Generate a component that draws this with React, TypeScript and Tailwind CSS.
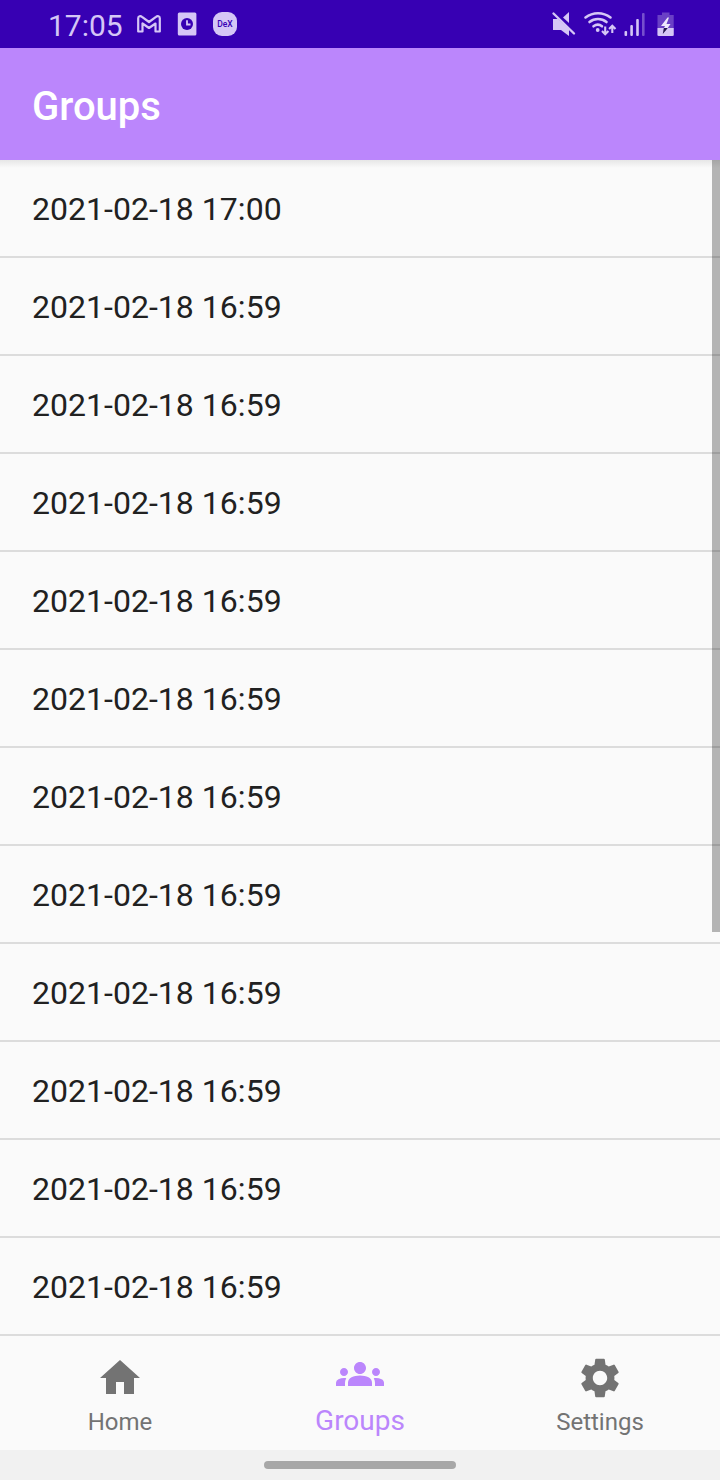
import React from "react";
import { MdGroups, MdHome, MdSettings } from "react-icons/md";

const groups = ["2021-02-18 17:00", ...Array<string>(11).fill("2021-02-18 16:59")];

function StatusBar() {
  return (
    <div className="flex h-12 shrink-0 items-center justify-between bg-[#3700b3] pl-12 text-[#d5c6f6]">
      <div className="flex h-12 items-center">
        <span className="w-[89px] pt-[2px] text-[30px] leading-[45px] whitespace-nowrap">17:05</span>
        <svg className="h-[18px] w-6" viewBox="0 0 24 18" fill="none" stroke="currentColor" strokeWidth="2.2" strokeLinejoin="round">
          <path d="M1.2 16.5V3.2C1.2 1 3.5.6 5 1.8L12 7l7-5.2c1.5-1.2 3.8-.8 3.8 1.4v13.3h-4.3V8.5L12 13 5.5 8.5v8z" />
        </svg>
        <svg className="ml-4 h-6 w-5" viewBox="0 0 20 24">
          <rect x=".8" y=".5" width="18.6" height="23" rx="1.5" fill="currentColor" />
          <circle cx="10" cy="12" r="6" fill="#3700b3" />
          <path d="M10 8.3v4.2h3.5" fill="none" stroke="currentColor" strokeWidth="1.8" />
        </svg>
        <div className="ml-4 flex h-6 w-6 items-center justify-center rounded-[9px] bg-current">
          <span className="text-[8.5px] leading-none font-medium text-[#3700b3]">DeX</span>
        </div>
      </div>
      <svg className="h-12 w-[180px]" viewBox="540 0 180 48">
        <path d="M553 19h5l11 10v7l-8-6h-8z" fill="currentColor" />
        <path d="M563 17.5l6-5.500v11z" fill="currentColor" />
        <path d="M553.5 13.5L574 33.5" stroke="currentColor" strokeWidth="2.4" strokeLinecap="round" />
        <g fill="none" stroke="currentColor" strokeWidth="2.6" strokeLinecap="round">
          <path d="M585.5 17.5c7.5-5.7 17.5-5.7 25 0M589.5 22c5-4 12-4 17 0M593.5 26.3c2.7-2 6-2 8.5 0" />
        </g>
        <circle cx="597.7" cy="30" r="1.9" fill="currentColor" />
        <path d="M605.2 26.500v7.500M602 31l3.200 3.200 3.200-3.200M612.300 33v-7M609.100 29l3.200-3.200 3.200 3.200" fill="none" stroke="currentColor" strokeWidth="2.1" />
        <g fill="currentColor">
          <rect x="624.5" y="31" width="2.6" height="5" rx="1" />
          <rect x="630.3" y="25" width="2.6" height="11" rx="1" />
          <rect x="636.2" y="19" width="2.6" height="17" rx="1" />
          <rect x="642" y="13" width="2.6" height="23" rx="1" opacity=".4" />
        </g>
        <path d="M657.5 15h4.500v-2.500h7.500V15h4.200v21h-16.200z" fill="#6a40c6" />
        <path d="M657.5 28h16.200v6.500q0 1.500-1.500 1.500H659q-1.500 0-1.500-1.500z" fill="currentColor" />
        <path d="M667.5 17.500l-6.500 8.500h4l-1.500 3h3.500l3.500-5h-4l2.500-6.500z" fill="#eee8fb" />
        <path d="M663.8 28h4l-5 6z" fill="#24164f" />
      </svg>
    </div>
  );
}

export default function App() {
  return (
    <div className="flex h-[1480px] w-[720px] flex-col overflow-hidden bg-[#fafafa] font-['Roboto',sans-serif]">
      <StatusBar />
      <header className="flex h-28 shrink-0 items-center bg-[#bb86fc] pt-[5px] pl-8 text-[40px] font-medium text-white">Groups</header>
      <main className="relative h-[1176px] shrink-0">
        <ul>
          {groups.map((name, i) => (
            <li key={i} className="flex h-[98px] items-center border-b-2 border-[#dcdcdc] pt-[2px] pl-8 text-[32px] tracking-[0.03px] text-[#212121]">
              {name}
            </li>
          ))}
        </ul>
        <div className="absolute inset-x-0 top-0 h-2 bg-linear-to-b from-black/8 to-transparent" />
        <div className="absolute top-0 right-0 h-[772px] w-2 bg-black/28" />
      </main>
      <nav className="grid h-[114px] shrink-0 grid-cols-3 text-[#737373]">
        <div className="flex flex-col items-center pt-[18px]">
          <MdHome className="size-12" />
          <span className="mt-[6px] text-[24px] leading-[28px]">Home</span>
        </div>
        <div className="flex flex-col items-center pt-[14px] text-[#bb86fc]">
          <MdGroups className="size-12" />
          <span className="mt-[7px] text-[28px] leading-[32px]">Groups</span>
        </div>
        <div className="flex flex-col items-center pt-[18px]">
          <MdSettings className="size-12" />
          <span className="mt-[6px] text-[24px] leading-[28px]">Settings</span>
        </div>
      </nav>
      <div className="flex h-[30px] shrink-0 items-center justify-center bg-[#f1f1f1]">
        <div className="h-2 w-48 rounded-full bg-[#a7a7a7]" />
      </div>
    </div>
  );
}
